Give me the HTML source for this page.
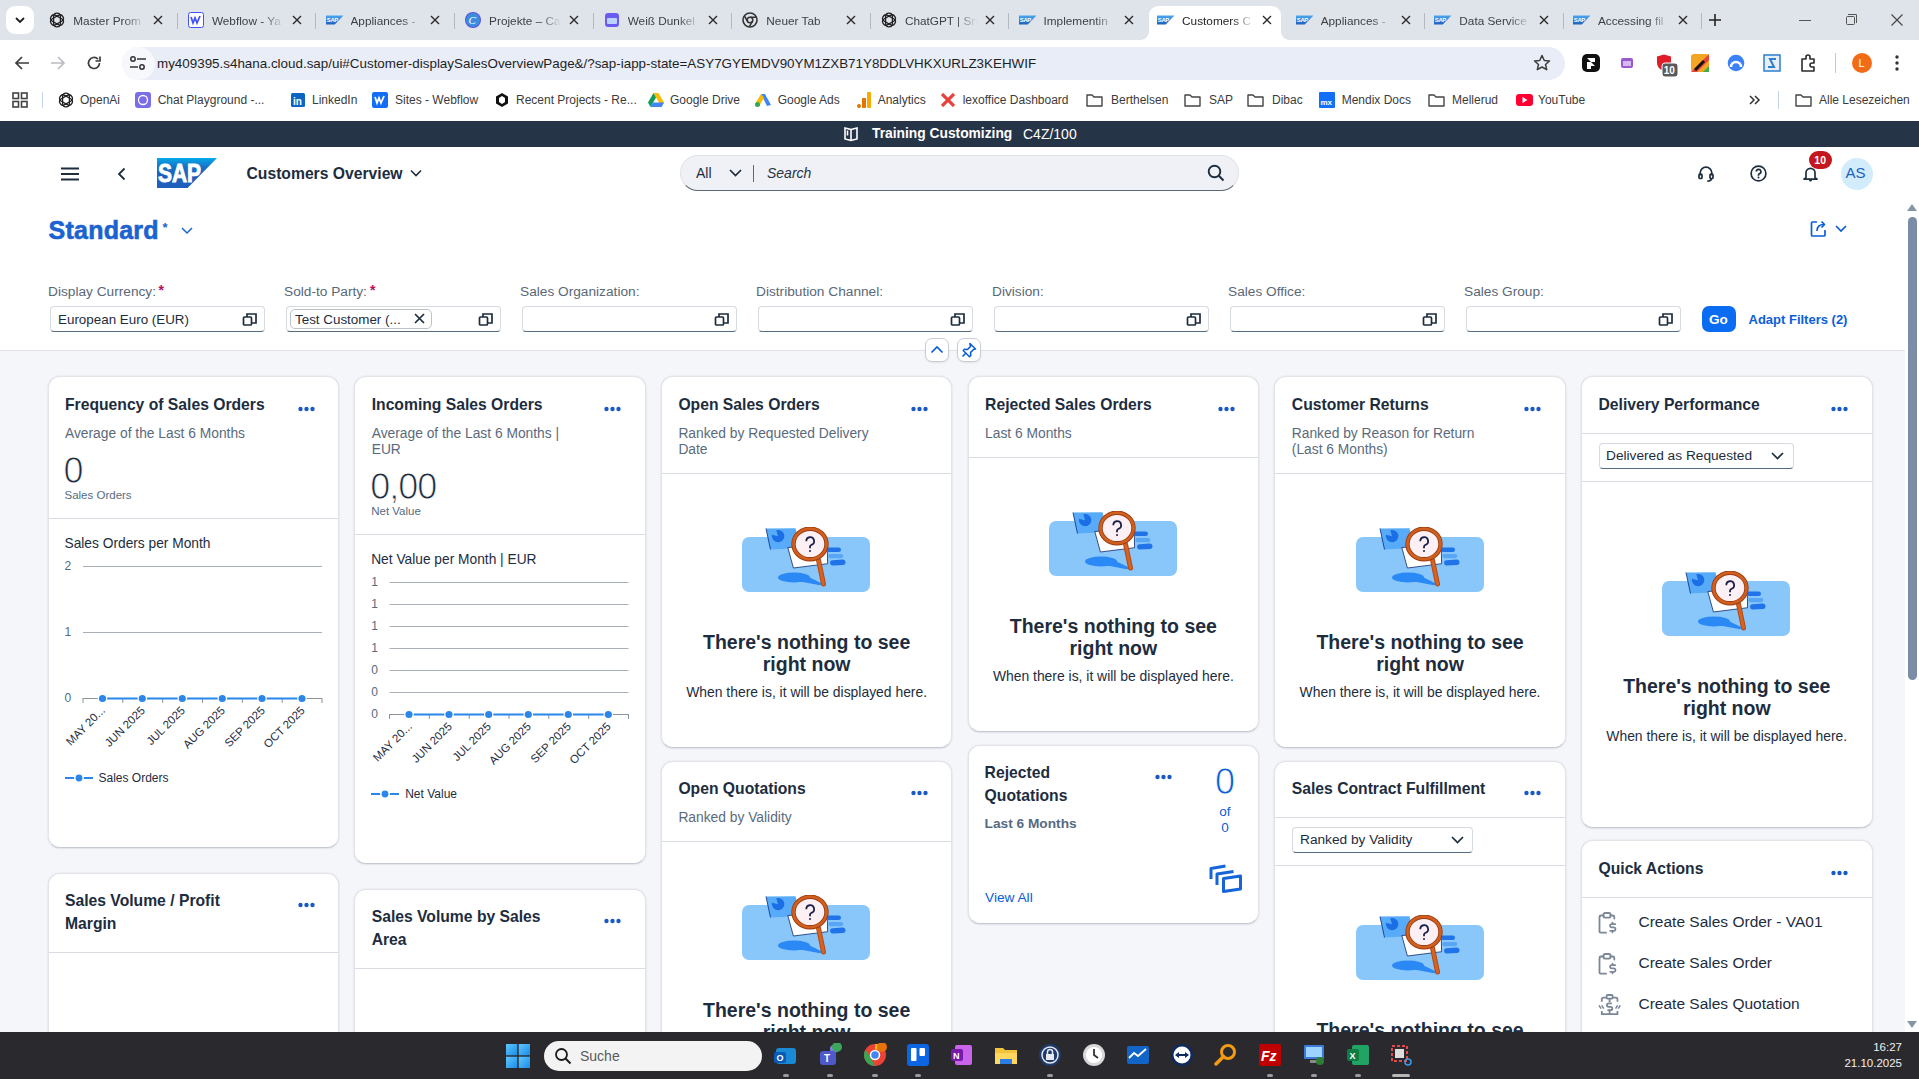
<!DOCTYPE html><html><head><meta charset="utf-8"><title>Customers Overview</title><style>
*{box-sizing:border-box;margin:0;padding:0}
html,body{width:1919px;height:1079px;overflow:hidden;background:#f5f6f9;font-family:"Liberation Sans",sans-serif}
.a{position:absolute}
.t{position:absolute;white-space:nowrap}
.card{position:absolute;background:#fff;border:1px solid #e2e4ea;border-bottom-color:#c5cad2;border-radius:12px;box-shadow:0 0 2px rgba(34,53,72,.12),0 1px 2px rgba(34,53,72,.06);overflow:hidden}
.sep{position:absolute;height:1px;background:#d9dce3}
</style></head><body>
<div class="a" style="left:0px;top:0px;width:1919px;height:40px;background:#dfe3ea"></div>
<div class="a" style="left:6px;top:6px;width:28px;height:28px;background:#fff;border-radius:9px"></div>
<svg class="a" style="left:14px;top:15px;" width="12" height="10" viewBox="0 0 12 10"><path d="M2 3l4 4 4-4" fill="none" stroke="#1f1f1f" stroke-width="1.8"/></svg>
<div class="a" style="left:177px;top:13px;width:1px;height:16px;background:#b4b8bf"></div>
<svg class="a" style="left:49.3px;top:12px;" width="16" height="16" viewBox="0 0 16 16"><g fill="none" stroke="#1f1f1f" stroke-width="1.25"><rect x="4.6" y="1.2" width="6.8" height="13.6" rx="3.4"/><rect x="4.6" y="1.2" width="6.8" height="13.6" rx="3.4" transform="rotate(60 8 8)"/><rect x="4.6" y="1.2" width="6.8" height="13.6" rx="3.4" transform="rotate(120 8 8)"/></g></svg>
<div class="t" style="left:73.3px;top:14px;font-size:11.8px;line-height:14px;color:#3c3f44;width:72px;overflow:hidden;-webkit-mask-image:linear-gradient(90deg,#000 70%,transparent)">Master Prom</div>
<svg class="a" style="left:153px;top:15px;" width="10" height="10" viewBox="0 0 10 10"><path d="M1 1l8 8M9 1l-8 8" stroke="#2a2a2a" stroke-width="1.35"/></svg>
<div class="a" style="left:315px;top:13px;width:1px;height:16px;background:#b4b8bf"></div>
<svg class="a" style="left:187.89999999999998px;top:12px;" width="16" height="16" viewBox="0 0 16 16"><rect x="0.5" y="0.5" width="15" height="15" rx="2" fill="#fff" stroke="#4353ff"/><path d="M3 5l2 6 2-5 2 5 3-7" fill="none" stroke="#4353ff" stroke-width="1.8"/></svg>
<div class="t" style="left:211.9px;top:14px;font-size:11.8px;line-height:14px;color:#3c3f44;width:72px;overflow:hidden;-webkit-mask-image:linear-gradient(90deg,#000 70%,transparent)">Webflow - Ya</div>
<svg class="a" style="left:292px;top:15px;" width="10" height="10" viewBox="0 0 10 10"><path d="M1 1l8 8M9 1l-8 8" stroke="#2a2a2a" stroke-width="1.35"/></svg>
<div class="a" style="left:454px;top:13px;width:1px;height:16px;background:#b4b8bf"></div>
<svg class="a" style="left:325.5px;top:14px;" width="18" height="12" viewBox="0 0 18 12"><defs><linearGradient id="fg" x1="0" y1="0" x2="0" y2="1"><stop offset="0" stop-color="#4aa8ee"/><stop offset="1" stop-color="#1f5fc0"/></linearGradient></defs><path d="M0 1.5h17.5L8.7 10.5H0z" fill="url(#fg)"/><text x="0.8" y="7.8" font-size="6" font-weight="bold" fill="#fff" font-family="Liberation Sans" letter-spacing="-.4">SAP</text></svg>
<div class="t" style="left:350.5px;top:14px;font-size:11.8px;line-height:14px;color:#3c3f44;width:72px;overflow:hidden;-webkit-mask-image:linear-gradient(90deg,#000 70%,transparent)">Appliances -</div>
<svg class="a" style="left:430px;top:15px;" width="10" height="10" viewBox="0 0 10 10"><path d="M1 1l8 8M9 1l-8 8" stroke="#2a2a2a" stroke-width="1.35"/></svg>
<div class="a" style="left:593px;top:13px;width:1px;height:16px;background:#b4b8bf"></div>
<svg class="a" style="left:465.09999999999997px;top:12px;" width="16" height="16" viewBox="0 0 16 16"><circle cx="8" cy="8" r="8" fill="#5a4fe0"/><circle cx="8" cy="8" r="7" fill="#2ab7d8" opacity=".6"/><text x="3.5" y="12" font-size="11" font-style="italic" fill="#fff" font-family="Liberation Serif">C</text></svg>
<div class="t" style="left:489.1px;top:14px;font-size:11.8px;line-height:14px;color:#3c3f44;width:72px;overflow:hidden;-webkit-mask-image:linear-gradient(90deg,#000 70%,transparent)">Projekte – Ca</div>
<svg class="a" style="left:569px;top:15px;" width="10" height="10" viewBox="0 0 10 10"><path d="M1 1l8 8M9 1l-8 8" stroke="#2a2a2a" stroke-width="1.35"/></svg>
<div class="a" style="left:731px;top:13px;width:1px;height:16px;background:#b4b8bf"></div>
<svg class="a" style="left:603.6999999999999px;top:12px;" width="16" height="16" viewBox="0 0 16 16"><rect x="1" y="1" width="14" height="14" rx="3" fill="#6b5cf0"/><rect x="3" y="6" width="10" height="6" rx="1" fill="#bcd3ff"/></svg>
<div class="t" style="left:627.7px;top:14px;font-size:11.8px;line-height:14px;color:#3c3f44;width:72px;overflow:hidden;-webkit-mask-image:linear-gradient(90deg,#000 70%,transparent)">Weiß Dunkel</div>
<svg class="a" style="left:708px;top:15px;" width="10" height="10" viewBox="0 0 10 10"><path d="M1 1l8 8M9 1l-8 8" stroke="#2a2a2a" stroke-width="1.35"/></svg>
<div class="a" style="left:870px;top:13px;width:1px;height:16px;background:#b4b8bf"></div>
<svg class="a" style="left:742.3px;top:12px;" width="16" height="16" viewBox="0 0 16 16"><circle cx="8" cy="8" r="7" fill="none" stroke="#333" stroke-width="1.6"/><circle cx="8" cy="8" r="2.8" fill="none" stroke="#333" stroke-width="1.5"/><path d="M8 5.2h6.3M5.6 9.4L2.4 4M10.4 9.4L7.2 14.8" stroke="#333" stroke-width="1.5"/></svg>
<div class="t" style="left:766.3px;top:14px;font-size:11.8px;line-height:14px;color:#3c3f44;width:72px;overflow:hidden;-webkit-mask-image:linear-gradient(90deg,#000 70%,transparent)">Neuer Tab</div>
<svg class="a" style="left:846px;top:15px;" width="10" height="10" viewBox="0 0 10 10"><path d="M1 1l8 8M9 1l-8 8" stroke="#2a2a2a" stroke-width="1.35"/></svg>
<div class="a" style="left:1008px;top:13px;width:1px;height:16px;background:#b4b8bf"></div>
<svg class="a" style="left:880.8999999999999px;top:12px;" width="16" height="16" viewBox="0 0 16 16"><g fill="none" stroke="#1f1f1f" stroke-width="1.25"><rect x="4.6" y="1.2" width="6.8" height="13.6" rx="3.4"/><rect x="4.6" y="1.2" width="6.8" height="13.6" rx="3.4" transform="rotate(60 8 8)"/><rect x="4.6" y="1.2" width="6.8" height="13.6" rx="3.4" transform="rotate(120 8 8)"/></g></svg>
<div class="t" style="left:904.9px;top:14px;font-size:11.8px;line-height:14px;color:#3c3f44;width:72px;overflow:hidden;-webkit-mask-image:linear-gradient(90deg,#000 70%,transparent)">ChatGPT | Sn</div>
<svg class="a" style="left:985px;top:15px;" width="10" height="10" viewBox="0 0 10 10"><path d="M1 1l8 8M9 1l-8 8" stroke="#2a2a2a" stroke-width="1.35"/></svg>
<svg class="a" style="left:1018.5px;top:14px;" width="18" height="12" viewBox="0 0 18 12"><defs><linearGradient id="fg" x1="0" y1="0" x2="0" y2="1"><stop offset="0" stop-color="#4aa8ee"/><stop offset="1" stop-color="#1f5fc0"/></linearGradient></defs><path d="M0 1.5h17.5L8.7 10.5H0z" fill="url(#fg)"/><text x="0.8" y="7.8" font-size="6" font-weight="bold" fill="#fff" font-family="Liberation Sans" letter-spacing="-.4">SAP</text></svg>
<div class="t" style="left:1043.5px;top:14px;font-size:11.8px;line-height:14px;color:#3c3f44;width:72px;overflow:hidden;-webkit-mask-image:linear-gradient(90deg,#000 70%,transparent)">Implementin</div>
<svg class="a" style="left:1124px;top:15px;" width="10" height="10" viewBox="0 0 10 10"><path d="M1 1l8 8M9 1l-8 8" stroke="#2a2a2a" stroke-width="1.35"/></svg>
<div class="a" style="left:1149px;top:6px;width:132px;height:36px;background:#fff;border-radius:9px 9px 0 0"></div>
<div class="a" style="left:1141px;top:32px;width:8px;height:8px;background:radial-gradient(circle at 0 0,transparent 7.5px,#fff 8px)"></div>
<div class="a" style="left:1281px;top:32px;width:8px;height:8px;background:radial-gradient(circle at 100% 0,transparent 7.5px,#fff 8px)"></div>
<svg class="a" style="left:1157.1px;top:14px;" width="18" height="12" viewBox="0 0 18 12"><defs><linearGradient id="fg" x1="0" y1="0" x2="0" y2="1"><stop offset="0" stop-color="#4aa8ee"/><stop offset="1" stop-color="#1f5fc0"/></linearGradient></defs><path d="M0 1.5h17.5L8.7 10.5H0z" fill="url(#fg)"/><text x="0.8" y="7.8" font-size="6" font-weight="bold" fill="#fff" font-family="Liberation Sans" letter-spacing="-.4">SAP</text></svg>
<div class="t" style="left:1182.1px;top:14px;font-size:11.8px;line-height:14px;color:#1f1f1f;width:72px;overflow:hidden;-webkit-mask-image:linear-gradient(90deg,#000 70%,transparent)">Customers C</div>
<svg class="a" style="left:1262px;top:15px;" width="10" height="10" viewBox="0 0 10 10"><path d="M1 1l8 8M9 1l-8 8" stroke="#2a2a2a" stroke-width="1.35"/></svg>
<div class="a" style="left:1424px;top:13px;width:1px;height:16px;background:#b4b8bf"></div>
<svg class="a" style="left:1295.6999999999998px;top:14px;" width="18" height="12" viewBox="0 0 18 12"><defs><linearGradient id="fg" x1="0" y1="0" x2="0" y2="1"><stop offset="0" stop-color="#4aa8ee"/><stop offset="1" stop-color="#1f5fc0"/></linearGradient></defs><path d="M0 1.5h17.5L8.7 10.5H0z" fill="url(#fg)"/><text x="0.8" y="7.8" font-size="6" font-weight="bold" fill="#fff" font-family="Liberation Sans" letter-spacing="-.4">SAP</text></svg>
<div class="t" style="left:1320.7px;top:14px;font-size:11.8px;line-height:14px;color:#3c3f44;width:72px;overflow:hidden;-webkit-mask-image:linear-gradient(90deg,#000 70%,transparent)">Appliances -</div>
<svg class="a" style="left:1401px;top:15px;" width="10" height="10" viewBox="0 0 10 10"><path d="M1 1l8 8M9 1l-8 8" stroke="#2a2a2a" stroke-width="1.35"/></svg>
<div class="a" style="left:1563px;top:13px;width:1px;height:16px;background:#b4b8bf"></div>
<svg class="a" style="left:1434.3px;top:14px;" width="18" height="12" viewBox="0 0 18 12"><defs><linearGradient id="fg" x1="0" y1="0" x2="0" y2="1"><stop offset="0" stop-color="#4aa8ee"/><stop offset="1" stop-color="#1f5fc0"/></linearGradient></defs><path d="M0 1.5h17.5L8.7 10.5H0z" fill="url(#fg)"/><text x="0.8" y="7.8" font-size="6" font-weight="bold" fill="#fff" font-family="Liberation Sans" letter-spacing="-.4">SAP</text></svg>
<div class="t" style="left:1459.3px;top:14px;font-size:11.8px;line-height:14px;color:#3c3f44;width:72px;overflow:hidden;-webkit-mask-image:linear-gradient(90deg,#000 70%,transparent)">Data Service</div>
<svg class="a" style="left:1539px;top:15px;" width="10" height="10" viewBox="0 0 10 10"><path d="M1 1l8 8M9 1l-8 8" stroke="#2a2a2a" stroke-width="1.35"/></svg>
<div class="a" style="left:1701px;top:13px;width:1px;height:16px;background:#b4b8bf"></div>
<svg class="a" style="left:1572.8999999999999px;top:14px;" width="18" height="12" viewBox="0 0 18 12"><defs><linearGradient id="fg" x1="0" y1="0" x2="0" y2="1"><stop offset="0" stop-color="#4aa8ee"/><stop offset="1" stop-color="#1f5fc0"/></linearGradient></defs><path d="M0 1.5h17.5L8.7 10.5H0z" fill="url(#fg)"/><text x="0.8" y="7.8" font-size="6" font-weight="bold" fill="#fff" font-family="Liberation Sans" letter-spacing="-.4">SAP</text></svg>
<div class="t" style="left:1597.9px;top:14px;font-size:11.8px;line-height:14px;color:#3c3f44;width:72px;overflow:hidden;-webkit-mask-image:linear-gradient(90deg,#000 70%,transparent)">Accessing fil</div>
<svg class="a" style="left:1678px;top:15px;" width="10" height="10" viewBox="0 0 10 10"><path d="M1 1l8 8M9 1l-8 8" stroke="#2a2a2a" stroke-width="1.35"/></svg>
<svg class="a" style="left:1709px;top:14px;" width="12" height="12" viewBox="0 0 12 12"><path d="M6 0v12M0 6h12" stroke="#222" stroke-width="1.6"/></svg>
<div class="a" style="left:1799px;top:20px;width:12px;height:1px;background:#555"></div>
<div class="a" style="left:1846px;top:16px;width:9px;height:9px;border:1px solid #555;border-radius:1.5px"></div>
<div class="a" style="left:1848px;top:14px;width:9px;height:9px;border-top:1px solid #555;border-right:1px solid #555;border-radius:0 1.5px 0 0"></div>
<svg class="a" style="left:1891px;top:14px;" width="12" height="12" viewBox="0 0 12 12"><path d="M0.5 0.5l11 11M11.5 0.5l-11 11" stroke="#444" stroke-width="1.1"/></svg>
<div class="a" style="left:0px;top:40px;width:1919px;height:44px;background:#fff;border-radius:0"></div>
<svg class="a" style="left:14px;top:55px;" width="16" height="16" viewBox="0 0 16 16"><path d="M15 8H2M8 2L2 8l6 6" fill="none" stroke="#3c3c3c" stroke-width="1.7"/></svg>
<svg class="a" style="left:50px;top:55px;" width="16" height="16" viewBox="0 0 16 16"><path d="M1 8h13M8 2l6 6-6 6" fill="none" stroke="#b9bcc0" stroke-width="1.7"/></svg>
<svg class="a" style="left:86px;top:55px;" width="16" height="16" viewBox="0 0 16 16"><path d="M13.5 8a5.5 5.5 0 1 1-1.6-3.9" fill="none" stroke="#3c3c3c" stroke-width="1.7"/><path d="M14 1.5v4.5H9.5" fill="none" stroke="#3c3c3c" stroke-width="1.7"/></svg>
<div class="a" style="left:122px;top:47px;width:1443px;height:33px;background:#e8edf8;border-radius:17px"></div>
<div class="a" style="left:122px;top:47px;width:33px;height:33px;background:#f6f8fc;border-radius:50%"></div>
<svg class="a" style="left:129px;top:55px;" width="18" height="16" viewBox="0 0 18 16"><g fill="none" stroke="#333" stroke-width="1.5"><path d="M8 4h9M1 12h8"/><circle cx="4" cy="4" r="2.2"/><circle cx="13" cy="12" r="2.2"/></g></svg>
<div class="t " style="left:157.0px;top:56.7px;font-size:13.4px;line-height:13.4px;color:#1f1f1f;" >my409395.s4hana.cloud.sap/ui#Customer-displaySalesOverviewPage&amp;/?sap-iapp-state=ASY7GYEMDV90YM1ZXB71Y8DDLVHKXURLZ3KEHWIF</div>
<svg class="a" style="left:1533px;top:54px;" width="18" height="18" viewBox="0 0 18 18"><path d="M9 1.5l2.3 5 5.2.5-4 3.5 1.2 5.2L9 13l-4.7 2.7 1.2-5.2-4-3.5 5.2-.5z" fill="none" stroke="#3c3c3c" stroke-width="1.5" stroke-linejoin="round"/></svg>
<svg class="a" style="left:1582px;top:54px;" width="18" height="18" viewBox="0 0 18 18"><rect width="18" height="18" rx="5" fill="#111"/><path d="M5 4h8v4H9l4 4H9v3H5V8h4z" fill="#fff"/></svg>
<svg class="a" style="left:1619px;top:55px;" width="16" height="16" viewBox="0 0 16 16"><rect x="2" y="3" width="12" height="10" rx="2" fill="#9b59d0"/><rect x="4" y="6" width="8" height="5" fill="#d8b8f0"/></svg>
<svg class="a" style="left:1655px;top:54px;" width="24" height="24" viewBox="0 0 24 24"><path d="M2 2.5l7-2 7 2v6c0 5-3.5 7-7 9-3.5-2-7-4-7-9z" fill="#e01c2a"/><rect x="7" y="9" width="16" height="14" rx="3" fill="#5a5a5a" stroke="#fff" stroke-width="1"/><text x="8.8" y="20" font-size="10" font-weight="bold" fill="#fff" font-family="Liberation Sans">10</text></svg>
<svg class="a" style="left:1691px;top:54px;" width="18" height="18" viewBox="0 0 18 18"><rect width="18" height="18" rx="3" fill="#f2a623"/><path d="M0 18L18 0v6L6 18z" fill="#e8403a"/><path d="M12 18L18 12v6z" fill="#3fae49"/><path d="M3 15l9-9 2 2-9 9z" fill="#111"/></svg>
<svg class="a" style="left:1727px;top:54px;" width="18" height="18" viewBox="0 0 18 18"><circle cx="9" cy="9" r="8.3" fill="#3b82f6"/><path d="M4 13a5 5 0 0 1 10 0" fill="none" stroke="#fff" stroke-width="2.5"/></svg>
<svg class="a" style="left:1763px;top:54px;" width="18" height="18" viewBox="0 0 18 18"><rect x="1" y="1" width="16" height="16" fill="#e8eef7" stroke="#2d7fd0" stroke-width="1.5"/><path d="M13 5H7l4 8H5" fill="none" stroke="#2d7fd0" stroke-width="2"/></svg>
<svg class="a" style="left:1799px;top:54px;" width="18" height="18" viewBox="0 0 18 18"><path d="M3 5h4V3a2 2 0 0 1 4 0v2h4v4h-2a2 2 0 0 0 0 4h2v4H3z" fill="none" stroke="#2b2b2b" stroke-width="1.6" stroke-linejoin="round"/></svg>
<div class="a" style="left:1835px;top:53px;width:1px;height:20px;background:#c7c9cc"></div>
<div class="a" style="left:1852px;top:53px;width:20px;height:20px;border-radius:50%;background:#f26c17"></div>
<div class="t " style="left:1858.5px;top:58.2px;font-size:11px;line-height:11px;color:#fff;" >L</div>
<svg class="a" style="left:1894px;top:54px;" width="6" height="18" viewBox="0 0 6 18"><circle cx="3" cy="3" r="1.7" fill="#333"/><circle cx="3" cy="9" r="1.7" fill="#333"/><circle cx="3" cy="15" r="1.7" fill="#333"/></svg>
<div class="a" style="left:0px;top:84px;width:1919px;height:37px;background:#fff"></div>
<svg class="a" style="left:12px;top:92px;" width="16" height="16" viewBox="0 0 16 16"><g fill="none" stroke="#444" stroke-width="1.6"><rect x="1" y="1" width="5.5" height="5.5"/><rect x="9.5" y="1" width="5.5" height="5.5"/><rect x="1" y="9.5" width="5.5" height="5.5"/><rect x="9.5" y="9.5" width="5.5" height="5.5"/></g></svg>
<div class="a" style="left:42px;top:92px;width:1px;height:16px;background:#c5d4ee"></div>
<svg class="a" style="left:57.7px;top:92px;" width="16" height="16" viewBox="0 0 16 16"><g fill="none" stroke="#1f1f1f" stroke-width="1.25"><rect x="4.6" y="1.2" width="6.8" height="13.6" rx="3.4"/><rect x="4.6" y="1.2" width="6.8" height="13.6" rx="3.4" transform="rotate(60 8 8)"/><rect x="4.6" y="1.2" width="6.8" height="13.6" rx="3.4" transform="rotate(120 8 8)"/></g></svg>
<div class="t " style="left:80.0px;top:94.3px;font-size:12px;line-height:12px;color:#3b3b3b;" >OpenAi</div>
<svg class="a" style="left:135px;top:92px;" width="16" height="16" viewBox="0 0 16 16"><rect width="16" height="16" rx="3" fill="#7b6ce8"/><circle cx="8" cy="8" r="4.5" fill="none" stroke="#fff" stroke-width="1.3"/></svg>
<div class="t " style="left:157.7px;top:94.3px;font-size:12px;line-height:12px;color:#3b3b3b;" >Chat Playground -...</div>
<svg class="a" style="left:290.7px;top:93px;" width="14" height="14" viewBox="0 0 14 14"><rect width="14" height="14" rx="1.5" fill="#0a66c2"/><text x="2" y="11.5" font-size="10" font-weight="bold" fill="#fff" font-family="Liberation Sans">in</text></svg>
<div class="t " style="left:312.0px;top:94.3px;font-size:12px;line-height:12px;color:#3b3b3b;" >LinkedIn</div>
<svg class="a" style="left:372px;top:92px;" width="16" height="16" viewBox="0 0 16 16"><rect width="16" height="16" rx="2" fill="#146ef5"/><path d="M3 5l2 6 2-5 2 5 3-7" fill="none" stroke="#fff" stroke-width="1.8"/></svg>
<div class="t " style="left:395.0px;top:94.3px;font-size:12px;line-height:12px;color:#3b3b3b;" >Sites - Webflow</div>
<svg class="a" style="left:493.7px;top:92px;" width="16" height="16" viewBox="0 0 16 16"><path d="M8 1l6 3.5v7L8 15l-6-3.5v-7z" fill="#111"/><path d="M8 4l3 2v4l-3 2-3-2V6z" fill="#fff"/></svg>
<div class="t " style="left:516.0px;top:94.3px;font-size:12px;line-height:12px;color:#3b3b3b;" >Recent Projects - Re...</div>
<svg class="a" style="left:647.7px;top:93px;" width="16" height="14" viewBox="0 0 16 14"><path d="M5.5 0h5l5.5 9.5-2.5 4.5z" fill="#fbbc04"/><path d="M5.5 0L0 9.5 2.5 14 8 4.5z" fill="#0f9d58"/><path d="M2.5 14h11l2.5-4.5H5z" fill="#4285f4"/></svg>
<div class="t " style="left:670.0px;top:94.3px;font-size:12px;line-height:12px;color:#3b3b3b;" >Google Drive</div>
<svg class="a" style="left:755px;top:93px;" width="16" height="14" viewBox="0 0 16 14"><path d="M6 1l4 0 6 11-4 1z" fill="#4285f4"/><path d="M6 1L0 11l4 2 5-8z" fill="#fbbc04"/><circle cx="2.5" cy="11.5" r="2.5" fill="#34a853"/></svg>
<div class="t " style="left:777.7px;top:94.3px;font-size:12px;line-height:12px;color:#3b3b3b;" >Google Ads</div>
<svg class="a" style="left:857px;top:92px;" width="14" height="16" viewBox="0 0 14 16"><rect x="10" y="0" width="4" height="16" rx="1" fill="#f9ab00"/><rect x="5" y="6" width="4" height="10" rx="1" fill="#e37400"/><circle cx="2" cy="14" r="2" fill="#e37400"/></svg>
<div class="t " style="left:877.7px;top:94.3px;font-size:12px;line-height:12px;color:#3b3b3b;" >Analytics</div>
<svg class="a" style="left:941px;top:93px;" width="14" height="14" viewBox="0 0 14 14"><path d="M1 1l12 12M13 1L1 13" stroke="#e8403a" stroke-width="3.2"/></svg>
<div class="t " style="left:962.7px;top:94.3px;font-size:12px;line-height:12px;color:#3b3b3b;" >lexoffice Dashboard</div>
<svg class="a" style="left:1086px;top:93px;" width="17" height="14" viewBox="0 0 17 14"><path d="M1 2h5l2 2h8v9H1z" fill="none" stroke="#444" stroke-width="1.4" stroke-linejoin="round"/></svg>
<div class="t " style="left:1111.0px;top:94.3px;font-size:12px;line-height:12px;color:#3b3b3b;" >Berthelsen</div>
<svg class="a" style="left:1184px;top:93px;" width="17" height="14" viewBox="0 0 17 14"><path d="M1 2h5l2 2h8v9H1z" fill="none" stroke="#444" stroke-width="1.4" stroke-linejoin="round"/></svg>
<div class="t " style="left:1209.0px;top:94.3px;font-size:12px;line-height:12px;color:#3b3b3b;" >SAP</div>
<svg class="a" style="left:1247px;top:93px;" width="17" height="14" viewBox="0 0 17 14"><path d="M1 2h5l2 2h8v9H1z" fill="none" stroke="#444" stroke-width="1.4" stroke-linejoin="round"/></svg>
<div class="t " style="left:1272.0px;top:94.3px;font-size:12px;line-height:12px;color:#3b3b3b;" >Dibac</div>
<svg class="a" style="left:1318.7px;top:92px;" width="16" height="16" viewBox="0 0 16 16"><rect width="16" height="16" rx="1" fill="#146ff8"/><text x="1.5" y="13" font-size="8" font-weight="bold" fill="#fff" font-family="Liberation Sans">mx</text></svg>
<div class="t " style="left:1341.7px;top:94.3px;font-size:12px;line-height:12px;color:#3b3b3b;" >Mendix Docs</div>
<svg class="a" style="left:1428px;top:93px;" width="17" height="14" viewBox="0 0 17 14"><path d="M1 2h5l2 2h8v9H1z" fill="none" stroke="#444" stroke-width="1.4" stroke-linejoin="round"/></svg>
<div class="t " style="left:1452.0px;top:94.3px;font-size:12px;line-height:12px;color:#3b3b3b;" >Mellerud</div>
<svg class="a" style="left:1516px;top:94px;" width="17" height="12" viewBox="0 0 17 12"><rect width="17" height="12" rx="3" fill="#ff0033"/><path d="M6.5 3l5 3-5 3z" fill="#fff"/></svg>
<div class="t " style="left:1538.0px;top:94.3px;font-size:12px;line-height:12px;color:#3b3b3b;" >YouTube</div>
<svg class="a" style="left:1795px;top:93px;" width="17" height="14" viewBox="0 0 17 14"><path d="M1 2h5l2 2h8v9H1z" fill="none" stroke="#444" stroke-width="1.4" stroke-linejoin="round"/></svg>
<div class="t " style="left:1819.0px;top:94.3px;font-size:12px;line-height:12px;color:#3b3b3b;" >Alle Lesezeichen</div>
<svg class="a" style="left:1749px;top:95px;" width="12" height="10" viewBox="0 0 12 10"><path d="M1 1l4 4-4 4M6 1l4 4-4 4" fill="none" stroke="#333" stroke-width="1.5"/></svg>
<div class="a" style="left:1778px;top:91px;width:1px;height:18px;background:#c5d4ee"></div>
<div class="a" style="left:0px;top:121px;width:1919px;height:26px;background:#263447"></div>
<svg class="a" style="left:843px;top:126px;" width="18" height="16" viewBox="0 0 18 16"><g fill="none" stroke="#fff" stroke-width="1.6"><path d="M2 2v11l6 1.5 6-1.5V2L8 3.5z"/><path d="M8 3.5v11"/><path d="M4.5 4.5v5"/></g></svg>
<div class="t " style="left:872.0px;top:127.3px;font-size:13.8px;line-height:13.8px;color:#fff;font-weight:bold;" >Training Customizing</div>
<div class="t " style="left:1023.0px;top:127.1px;font-size:14px;line-height:14px;color:#fff;" >C4Z/100</div>
<div class="a" style="left:0px;top:147px;width:1919px;height:203px;background:#fff"></div>
<svg class="a" style="left:61px;top:167px;" width="18" height="14" viewBox="0 0 18 14"><path d="M0 1.5h18M0 7h18M0 12.5h18" stroke="#1d2d3e" stroke-width="1.8"/></svg>
<svg class="a" style="left:117px;top:167px;" width="9" height="14" viewBox="0 0 9 14"><path d="M7.5 1.5L2 7l5.5 5.5" fill="none" stroke="#1d2d3e" stroke-width="1.8"/></svg>
<svg class="a" style="left:157px;top:158px;" width="60" height="30" viewBox="0 0 60 30"><defs><linearGradient id="sg" x1="0" y1="0" x2="0" y2="1"><stop offset="0" stop-color="#00b8f1"/><stop offset=".02" stop-color="#06a5e5"/><stop offset=".31" stop-color="#1870c5"/><stop offset=".58" stop-color="#1d61bc"/><stop offset="1" stop-color="#1e5fbb"/></linearGradient></defs><path d="M0 0h60L30.6 30H0z" fill="url(#sg)"/><text x="1" y="24.1" font-size="25" font-weight="bold" fill="#fff" font-family="Liberation Sans" textLength="43" lengthAdjust="spacingAndGlyphs" stroke="#fff" stroke-width=".9">SAP</text></svg>
<div class="t " style="left:246.5px;top:166.2px;font-size:15.7px;line-height:15.7px;color:#1d2d3e;font-weight:bold;" >Customers Overview</div>
<svg class="a" style="left:410px;top:169px;" width="12" height="8" viewBox="0 0 12 8"><path d="M1 1.5l5 5 5-5" fill="none" stroke="#1d2d3e" stroke-width="1.6"/></svg>
<div class="a" style="left:680px;top:155px;width:559px;height:36px;background:#eff1f6;border:1px solid #dfe2e8;border-bottom:1px solid #5b6776;border-radius:18px"></div>
<div class="t " style="left:696.0px;top:166.0px;font-size:14px;line-height:14px;color:#1d2d3e;" >All</div>
<svg class="a" style="left:729px;top:169px;" width="13" height="8" viewBox="0 0 13 8"><path d="M1 1l5.5 5.5L12 1" fill="none" stroke="#1d2d3e" stroke-width="1.7"/></svg>
<div class="a" style="left:753px;top:165px;width:1px;height:17px;background:#556b82"></div>
<div class="t " style="left:767.0px;top:166.0px;font-size:14px;line-height:14px;color:#2b3542;font-style:italic" >Search</div>
<svg class="a" style="left:1207px;top:164px;" width="18" height="18" viewBox="0 0 18 18"><circle cx="7.5" cy="7.5" r="5.8" fill="none" stroke="#1d2d3e" stroke-width="1.9"/><path d="M11.8 11.8l4.7 4.7" stroke="#1d2d3e" stroke-width="2"/></svg>
<svg class="a" style="left:1698px;top:165px;" width="16" height="17" viewBox="0 0 16 17"><g fill="none" stroke="#1d2d3e" stroke-width="1.7"><path d="M2.2 10.5V8a5.8 5.8 0 0 1 11.6 0v2.5"/><rect x="1" y="9" width="3" height="4.5" rx="1"/><rect x="12" y="9" width="3" height="4.5" rx="1"/><path d="M13.5 13.5c0 1.6-1.6 2.6-4.2 2.6"/></g></svg>
<svg class="a" style="left:1749.5px;top:165.2px;" width="17" height="17" viewBox="0 0 17 17"><circle cx="8.5" cy="8.5" r="7.4" fill="none" stroke="#1d2d3e" stroke-width="1.7"/><path d="M6.3 6.6a2.3 2.3 0 1 1 3.1 2.2c-.6.3-.9.7-.9 1.3v.6" fill="none" stroke="#1d2d3e" stroke-width="1.7"/><circle cx="8.5" cy="12.6" r="1" fill="#1d2d3e"/></svg>
<svg class="a" style="left:1802.5px;top:166px;" width="15" height="16" viewBox="0 0 15 16"><path d="M3 11.5V6.8a4.5 4.5 0 0 1 9 0v4.7l2 1.6H1z" fill="none" stroke="#1d2d3e" stroke-width="1.7" stroke-linejoin="round"/><path d="M6 14a1.5 1.5 0 0 0 3 0z" fill="#1d2d3e"/></svg>
<div class="a" style="left:1809px;top:151px;width:23px;height:18px;border-radius:9px;background:#c4161f"></div>
<div class="t " style="left:1814.3px;top:155.1px;font-size:10.5px;line-height:10.5px;color:#fff;font-weight:bold;" >10</div>
<div class="a" style="left:1840.5px;top:157.5px;width:32px;height:32px;border-radius:50%;background:#d3ecfb"></div>
<div class="t " style="left:1845.5px;top:165.3px;font-size:15px;line-height:15px;color:#1c5fbf;" >AS</div>
<div class="t " style="left:48.5px;top:217.8px;font-size:25px;line-height:25px;color:#1b63d0;font-weight:bold;-webkit-text-stroke:0.6px #1b63d0;letter-spacing:0.25px" >Standard</div>
<div class="t " style="left:162.5px;top:221.0px;font-size:13px;line-height:13px;color:#1b63d0;font-weight:bold;" >*</div>
<svg class="a" style="left:180.5px;top:227px;" width="12" height="8" viewBox="0 0 12 8"><path d="M1 1l5 5 5-5" fill="none" stroke="#1b63d0" stroke-width="1.5"/></svg>
<svg class="a" style="left:1810px;top:220px;" width="18" height="17" viewBox="0 0 18 17"><g fill="none" stroke="#0b5fd4" stroke-width="1.7" stroke-linejoin="round"><path d="M7 2H2.5a1 1 0 0 0-1 1v12a1 1 0 0 0 1 1h11.5a1 1 0 0 0 1-1v-5"/><path d="M7 11c0-4.5 2.5-6.5 7-6.5"/><path d="M11.5 1.5l3 3-3 3"/></g></svg>
<svg class="a" style="left:1835px;top:225px;" width="12" height="8" viewBox="0 0 12 8"><path d="M1 1l5 5 5-5" fill="none" stroke="#0a5ed8" stroke-width="1.7"/></svg>
<div class="t " style="left:48.0px;top:285.1px;font-size:13.7px;line-height:13.7px;color:#5b6877;" >Display Currency:</div>
<div class="t" style="left:158.5px;top:283px;font-size:14px;line-height:14px;color:#b5105e;font-weight:bold">*</div>
<div class="a" style="left:50px;top:306px;width:215px;height:26px;background:#fff;border:1px solid #d6dae1;border-bottom:1px solid #556b82;border-radius:4px"></div>
<svg class="a" style="left:241px;top:311px;" width="16" height="16" viewBox="0 0 16 16"><g fill="none" stroke="#1d2d3e" stroke-width="1.7"><rect x="2.5" y="6" width="8" height="8" rx="1"/><path d="M6 6V3h9v9h-4.5"/></g></svg>
<div class="t " style="left:284.0px;top:285.1px;font-size:13.7px;line-height:13.7px;color:#5b6877;" >Sold-to Party:</div>
<div class="t" style="left:370.0px;top:283px;font-size:14px;line-height:14px;color:#b5105e;font-weight:bold">*</div>
<div class="a" style="left:286px;top:306px;width:215px;height:26px;background:#fff;border:1px solid #d6dae1;border-bottom:1px solid #556b82;border-radius:4px"></div>
<svg class="a" style="left:477px;top:311px;" width="16" height="16" viewBox="0 0 16 16"><g fill="none" stroke="#1d2d3e" stroke-width="1.7"><rect x="2.5" y="6" width="8" height="8" rx="1"/><path d="M6 6V3h9v9h-4.5"/></g></svg>
<div class="t " style="left:520.0px;top:285.1px;font-size:13.7px;line-height:13.7px;color:#5b6877;" >Sales Organization:</div>
<div class="a" style="left:522px;top:306px;width:215px;height:26px;background:#fff;border:1px solid #d6dae1;border-bottom:1px solid #556b82;border-radius:4px"></div>
<svg class="a" style="left:713px;top:311px;" width="16" height="16" viewBox="0 0 16 16"><g fill="none" stroke="#1d2d3e" stroke-width="1.7"><rect x="2.5" y="6" width="8" height="8" rx="1"/><path d="M6 6V3h9v9h-4.5"/></g></svg>
<div class="t " style="left:756.0px;top:285.1px;font-size:13.7px;line-height:13.7px;color:#5b6877;" >Distribution Channel:</div>
<div class="a" style="left:758px;top:306px;width:215px;height:26px;background:#fff;border:1px solid #d6dae1;border-bottom:1px solid #556b82;border-radius:4px"></div>
<svg class="a" style="left:949px;top:311px;" width="16" height="16" viewBox="0 0 16 16"><g fill="none" stroke="#1d2d3e" stroke-width="1.7"><rect x="2.5" y="6" width="8" height="8" rx="1"/><path d="M6 6V3h9v9h-4.5"/></g></svg>
<div class="t " style="left:992.0px;top:285.1px;font-size:13.7px;line-height:13.7px;color:#5b6877;" >Division:</div>
<div class="a" style="left:994px;top:306px;width:215px;height:26px;background:#fff;border:1px solid #d6dae1;border-bottom:1px solid #556b82;border-radius:4px"></div>
<svg class="a" style="left:1185px;top:311px;" width="16" height="16" viewBox="0 0 16 16"><g fill="none" stroke="#1d2d3e" stroke-width="1.7"><rect x="2.5" y="6" width="8" height="8" rx="1"/><path d="M6 6V3h9v9h-4.5"/></g></svg>
<div class="t " style="left:1228.0px;top:285.1px;font-size:13.7px;line-height:13.7px;color:#5b6877;" >Sales Office:</div>
<div class="a" style="left:1230px;top:306px;width:215px;height:26px;background:#fff;border:1px solid #d6dae1;border-bottom:1px solid #556b82;border-radius:4px"></div>
<svg class="a" style="left:1421px;top:311px;" width="16" height="16" viewBox="0 0 16 16"><g fill="none" stroke="#1d2d3e" stroke-width="1.7"><rect x="2.5" y="6" width="8" height="8" rx="1"/><path d="M6 6V3h9v9h-4.5"/></g></svg>
<div class="t " style="left:1464.0px;top:285.1px;font-size:13.7px;line-height:13.7px;color:#5b6877;" >Sales Group:</div>
<div class="a" style="left:1466px;top:306px;width:215px;height:26px;background:#fff;border:1px solid #d6dae1;border-bottom:1px solid #556b82;border-radius:4px"></div>
<svg class="a" style="left:1657px;top:311px;" width="16" height="16" viewBox="0 0 16 16"><g fill="none" stroke="#1d2d3e" stroke-width="1.7"><rect x="2.5" y="6" width="8" height="8" rx="1"/><path d="M6 6V3h9v9h-4.5"/></g></svg>
<div class="t " style="left:58.0px;top:313.0px;font-size:13.4px;line-height:13.4px;color:#1d2d3e;" >European Euro (EUR)</div>
<div class="a" style="left:290px;top:309px;width:142px;height:20px;background:#fff;border:1px solid #bcc3ca;border-radius:5px"></div>
<div class="t " style="left:295.0px;top:313.0px;font-size:13.4px;line-height:13.4px;color:#1d2d3e;" >Test Customer (...</div>
<svg class="a" style="left:414px;top:313px;" width="11" height="11" viewBox="0 0 11 11"><path d="M1 1l9 9M10 1l-9 9" stroke="#1d2d3e" stroke-width="1.7"/></svg>
<div class="a" style="left:1702px;top:306px;width:34px;height:26px;background:#0a6cf0;border-radius:7px"></div>
<div class="t " style="left:1709.0px;top:312.6px;font-size:13.5px;line-height:13.5px;color:#fff;font-weight:bold;" >Go</div>
<div class="t " style="left:1748.5px;top:313.0px;font-size:13px;line-height:13px;color:#0b5ed7;font-weight:bold;" >Adapt Filters (2)</div>
<div class="a" style="left:0px;top:351px;width:1905px;height:681px;background:#f5f6f9"></div>
<div class="a" style="left:0px;top:350px;width:1905px;height:1px;background:#dfe2e8"></div>
<div class="a" style="left:925px;top:338px;width:24px;height:24px;background:#fff;border:1px solid #c9ced6;border-radius:7px;box-shadow:0 1px 2px rgba(0,0,0,.08)"></div>
<svg class="a" style="left:930px;top:345px;" width="14" height="9" viewBox="0 0 14 9"><path d="M1.5 7.5L7 2l5.5 5.5" fill="none" stroke="#0a5ed8" stroke-width="1.7"/></svg>
<div class="a" style="left:957px;top:338px;width:24px;height:24px;background:#fff;border:1px solid #c9ced6;border-radius:7px;box-shadow:0 1px 2px rgba(0,0,0,.08)"></div>
<svg class="a" style="left:961px;top:342px;" width="16" height="16" viewBox="0 0 16 16"><g fill="none" stroke="#0a5ed8" stroke-width="1.6" stroke-linejoin="round"><path d="M9 1.5l5.5 5.5-2 .5-3 3 .3 3-1.3 1.3-6.3-6.3L3.5 7.2l3 .3 3-3z"/><path d="M5 11l-3.5 3.5"/></g></svg>
<div class="a" style="left:1905px;top:200px;width:14px;height:832px;background:#fff"></div>
<svg class="a" style="left:1906px;top:203px;" width="12" height="9" viewBox="0 0 12 9"><path d="M6 1l5 7H1z" fill="#8696a9"/></svg>
<div class="a" style="left:1908px;top:217px;width:9px;height:463px;background:#7b8ca6;border-radius:4.5px"></div>
<svg class="a" style="left:1906px;top:1020px;" width="12" height="9" viewBox="0 0 12 9"><path d="M6 8l5-7H1z" fill="#8696a9"/></svg>
<div class="card" style="left:47.5px;top:376px;width:291.5px;height:472px"></div>
<div class="t " style="left:65.0px;top:396.7px;font-size:15.7px;line-height:15.7px;color:#1d2d3e;font-weight:bold;" >Frequency of Sales Orders</div>
<svg class="a" style="left:297.5px;top:406px;" width="18" height="6" viewBox="0 0 18 6"><circle cx="2.5" cy="3" r="2.2" fill="#1a59c4"/><circle cx="8.5" cy="3" r="2.2" fill="#1a59c4"/><circle cx="14.5" cy="3" r="2.2" fill="#1a59c4"/></svg>
<div class="t " style="left:65.0px;top:427.3px;font-size:13.8px;line-height:13.8px;color:#5a6a7d;" >Average of the Last 6 Months</div>
<div class="t " style="left:63.5px;top:452.5px;font-size:36px;line-height:36px;color:#1d2d3e;-webkit-text-stroke:0.9px #fff" >0</div>
<div class="t " style="left:64.5px;top:490.3px;font-size:11.5px;line-height:11.5px;color:#556b82;" >Sales Orders</div>
<div class="sep" style="left:48.5px;top:518px;width:289.5px"></div>
<div class="t " style="left:64.5px;top:536.7px;font-size:13.75px;line-height:13.75px;color:#1d2d3e;" >Sales Orders per Month</div>
<svg class="a" style="left:0;top:0" width="1919" height="1079"><line x1="83" y1="566.5" x2="322" y2="566.5" stroke="#a9b0b8" stroke-width="1"/><line x1="83" y1="632.5" x2="322" y2="632.5" stroke="#a9b0b8" stroke-width="1"/><line x1="83" y1="698.5" x2="322" y2="698.5" stroke="#8a949e" stroke-width="1"/><line x1="83.0" y1="698" x2="83.0" y2="703" stroke="#8a949e" stroke-width="1"/><line x1="122.8" y1="698" x2="122.8" y2="703" stroke="#8a949e" stroke-width="1"/><line x1="162.7" y1="698" x2="162.7" y2="703" stroke="#8a949e" stroke-width="1"/><line x1="202.5" y1="698" x2="202.5" y2="703" stroke="#8a949e" stroke-width="1"/><line x1="242.3" y1="698" x2="242.3" y2="703" stroke="#8a949e" stroke-width="1"/><line x1="282.2" y1="698" x2="282.2" y2="703" stroke="#8a949e" stroke-width="1"/><line x1="322.0" y1="698" x2="322.0" y2="703" stroke="#8a949e" stroke-width="1"/><polyline points="102.5,698.5 142.3,698.5 182.3,698.5 222.3,698.5 262,698.5 302,698.5" fill="none" stroke="#2b86ea" stroke-width="2"/><circle cx="102.5" cy="698.5" r="4.2" fill="#2b86ea" stroke="#fff" stroke-width="1.2"/><circle cx="142.3" cy="698.5" r="4.2" fill="#2b86ea" stroke="#fff" stroke-width="1.2"/><circle cx="182.3" cy="698.5" r="4.2" fill="#2b86ea" stroke="#fff" stroke-width="1.2"/><circle cx="222.3" cy="698.5" r="4.2" fill="#2b86ea" stroke="#fff" stroke-width="1.2"/><circle cx="262" cy="698.5" r="4.2" fill="#2b86ea" stroke="#fff" stroke-width="1.2"/><circle cx="302" cy="698.5" r="4.2" fill="#2b86ea" stroke="#fff" stroke-width="1.2"/></svg>
<div class="t " style="left:64.5px;top:560.3px;font-size:12px;line-height:12px;color:#556b82;" >2</div>
<div class="t " style="left:64.5px;top:626.3px;font-size:12px;line-height:12px;color:#556b82;" >1</div>
<div class="t " style="left:64.5px;top:692.3px;font-size:12px;line-height:12px;color:#556b82;" >0</div>
<div class="t" style="left:-100.0px;top:700px;width:200px;text-align:right;font-size:11.5px;line-height:12px;color:#1d2d3e;transform-origin:100% 0;transform:rotate(-45deg) translate(-4px,2px)">MAY 20...</div>
<div class="t" style="left:-60.2px;top:700px;width:200px;text-align:right;font-size:11.5px;line-height:12px;color:#1d2d3e;transform-origin:100% 0;transform:rotate(-45deg) translate(-4px,2px)">JUN 2025</div>
<div class="t" style="left:-20.2px;top:700px;width:200px;text-align:right;font-size:11.5px;line-height:12px;color:#1d2d3e;transform-origin:100% 0;transform:rotate(-45deg) translate(-4px,2px)">JUL 2025</div>
<div class="t" style="left:19.8px;top:700px;width:200px;text-align:right;font-size:11.5px;line-height:12px;color:#1d2d3e;transform-origin:100% 0;transform:rotate(-45deg) translate(-4px,2px)">AUG 2025</div>
<div class="t" style="left:59.5px;top:700px;width:200px;text-align:right;font-size:11.5px;line-height:12px;color:#1d2d3e;transform-origin:100% 0;transform:rotate(-45deg) translate(-4px,2px)">SEP 2025</div>
<div class="t" style="left:99.5px;top:700px;width:200px;text-align:right;font-size:11.5px;line-height:12px;color:#1d2d3e;transform-origin:100% 0;transform:rotate(-45deg) translate(-4px,2px)">OCT 2025</div>
<svg class="a" style="left:64.5px;top:773.5px;" width="28" height="8" viewBox="0 0 28 8"><line x1="0" y1="4" x2="28" y2="4" stroke="#2b86ea" stroke-width="2"/><circle cx="14" cy="4" r="4.2" fill="#2b86ea" stroke="#fff" stroke-width="1.5"/></svg>
<div class="t " style="left:98.5px;top:771.8px;font-size:12px;line-height:12px;color:#1d2d3e;" >Sales Orders</div>
<div class="card" style="left:354.2px;top:376px;width:291.5px;height:488px"></div>
<div class="t " style="left:371.7px;top:396.7px;font-size:15.7px;line-height:15.7px;color:#1d2d3e;font-weight:bold;" >Incoming Sales Orders</div>
<svg class="a" style="left:604.2px;top:406px;" width="18" height="6" viewBox="0 0 18 6"><circle cx="2.5" cy="3" r="2.2" fill="#1a59c4"/><circle cx="8.5" cy="3" r="2.2" fill="#1a59c4"/><circle cx="14.5" cy="3" r="2.2" fill="#1a59c4"/></svg>
<div class="t " style="left:371.7px;top:427.3px;font-size:13.8px;line-height:13.8px;color:#5a6a7d;" >Average of the Last 6 Months |</div>
<div class="t " style="left:371.7px;top:443.3px;font-size:13.8px;line-height:13.8px;color:#5a6a7d;" >EUR</div>
<div class="t " style="left:370.2px;top:469.0px;font-size:36px;line-height:36px;color:#1d2d3e;-webkit-text-stroke:0.9px #fff;letter-spacing:-1px" >0,00</div>
<div class="t " style="left:371.2px;top:506.3px;font-size:11.5px;line-height:11.5px;color:#556b82;" >Net Value</div>
<div class="sep" style="left:355.2px;top:534px;width:289.5px"></div>
<div class="t " style="left:371.2px;top:552.7px;font-size:13.75px;line-height:13.75px;color:#1d2d3e;" >Net Value per Month | EUR</div>
<svg class="a" style="left:0;top:0" width="1919" height="1079"><line x1="389.5" y1="582.5" x2="628.5" y2="582.5" stroke="#a9b0b8" stroke-width="1"/><line x1="389.5" y1="604.5" x2="628.5" y2="604.5" stroke="#a9b0b8" stroke-width="1"/><line x1="389.5" y1="626.5" x2="628.5" y2="626.5" stroke="#a9b0b8" stroke-width="1"/><line x1="389.5" y1="648.5" x2="628.5" y2="648.5" stroke="#a9b0b8" stroke-width="1"/><line x1="389.5" y1="670.5" x2="628.5" y2="670.5" stroke="#a9b0b8" stroke-width="1"/><line x1="389.5" y1="692.5" x2="628.5" y2="692.5" stroke="#a9b0b8" stroke-width="1"/><line x1="389.5" y1="714.5" x2="628.5" y2="714.5" stroke="#8a949e" stroke-width="1"/><line x1="389.5" y1="714" x2="389.5" y2="719" stroke="#8a949e" stroke-width="1"/><line x1="429.3" y1="714" x2="429.3" y2="719" stroke="#8a949e" stroke-width="1"/><line x1="469.2" y1="714" x2="469.2" y2="719" stroke="#8a949e" stroke-width="1"/><line x1="509.0" y1="714" x2="509.0" y2="719" stroke="#8a949e" stroke-width="1"/><line x1="548.8" y1="714" x2="548.8" y2="719" stroke="#8a949e" stroke-width="1"/><line x1="588.7" y1="714" x2="588.7" y2="719" stroke="#8a949e" stroke-width="1"/><line x1="628.5" y1="714" x2="628.5" y2="719" stroke="#8a949e" stroke-width="1"/><polyline points="409,714.5 449,714.5 488.7,714.5 528.3,714.5 568.3,714.5 608.3,714.5" fill="none" stroke="#2b86ea" stroke-width="2"/><circle cx="409" cy="714.5" r="4.2" fill="#2b86ea" stroke="#fff" stroke-width="1.2"/><circle cx="449" cy="714.5" r="4.2" fill="#2b86ea" stroke="#fff" stroke-width="1.2"/><circle cx="488.7" cy="714.5" r="4.2" fill="#2b86ea" stroke="#fff" stroke-width="1.2"/><circle cx="528.3" cy="714.5" r="4.2" fill="#2b86ea" stroke="#fff" stroke-width="1.2"/><circle cx="568.3" cy="714.5" r="4.2" fill="#2b86ea" stroke="#fff" stroke-width="1.2"/><circle cx="608.3" cy="714.5" r="4.2" fill="#2b86ea" stroke="#fff" stroke-width="1.2"/></svg>
<div class="t " style="left:371.2px;top:576.3px;font-size:12px;line-height:12px;color:#556b82;" >1</div>
<div class="t " style="left:371.2px;top:598.3px;font-size:12px;line-height:12px;color:#556b82;" >1</div>
<div class="t " style="left:371.2px;top:620.3px;font-size:12px;line-height:12px;color:#556b82;" >1</div>
<div class="t " style="left:371.2px;top:642.3px;font-size:12px;line-height:12px;color:#556b82;" >1</div>
<div class="t " style="left:371.2px;top:664.3px;font-size:12px;line-height:12px;color:#556b82;" >0</div>
<div class="t " style="left:371.2px;top:686.3px;font-size:12px;line-height:12px;color:#556b82;" >0</div>
<div class="t " style="left:371.2px;top:708.3px;font-size:12px;line-height:12px;color:#556b82;" >0</div>
<div class="t" style="left:206.5px;top:716px;width:200px;text-align:right;font-size:11.5px;line-height:12px;color:#1d2d3e;transform-origin:100% 0;transform:rotate(-45deg) translate(-4px,2px)">MAY 20...</div>
<div class="t" style="left:246.5px;top:716px;width:200px;text-align:right;font-size:11.5px;line-height:12px;color:#1d2d3e;transform-origin:100% 0;transform:rotate(-45deg) translate(-4px,2px)">JUN 2025</div>
<div class="t" style="left:286.2px;top:716px;width:200px;text-align:right;font-size:11.5px;line-height:12px;color:#1d2d3e;transform-origin:100% 0;transform:rotate(-45deg) translate(-4px,2px)">JUL 2025</div>
<div class="t" style="left:325.8px;top:716px;width:200px;text-align:right;font-size:11.5px;line-height:12px;color:#1d2d3e;transform-origin:100% 0;transform:rotate(-45deg) translate(-4px,2px)">AUG 2025</div>
<div class="t" style="left:365.8px;top:716px;width:200px;text-align:right;font-size:11.5px;line-height:12px;color:#1d2d3e;transform-origin:100% 0;transform:rotate(-45deg) translate(-4px,2px)">SEP 2025</div>
<div class="t" style="left:405.8px;top:716px;width:200px;text-align:right;font-size:11.5px;line-height:12px;color:#1d2d3e;transform-origin:100% 0;transform:rotate(-45deg) translate(-4px,2px)">OCT 2025</div>
<svg class="a" style="left:371.2px;top:789.5px;" width="28" height="8" viewBox="0 0 28 8"><line x1="0" y1="4" x2="28" y2="4" stroke="#2b86ea" stroke-width="2"/><circle cx="14" cy="4" r="4.2" fill="#2b86ea" stroke="#fff" stroke-width="1.5"/></svg>
<div class="t " style="left:405.2px;top:787.8px;font-size:12px;line-height:12px;color:#1d2d3e;" >Net Value</div>
<div class="card" style="left:660.9px;top:376px;width:291.5px;height:372px"></div>
<div class="t " style="left:678.4px;top:396.7px;font-size:15.7px;line-height:15.7px;color:#1d2d3e;font-weight:bold;" >Open Sales Orders</div>
<svg class="a" style="left:910.9px;top:406px;" width="18" height="6" viewBox="0 0 18 6"><circle cx="2.5" cy="3" r="2.2" fill="#1a59c4"/><circle cx="8.5" cy="3" r="2.2" fill="#1a59c4"/><circle cx="14.5" cy="3" r="2.2" fill="#1a59c4"/></svg>
<div class="t " style="left:678.4px;top:427.3px;font-size:13.8px;line-height:13.8px;color:#5a6a7d;" >Ranked by Requested Delivery</div>
<div class="t " style="left:678.4px;top:443.3px;font-size:13.8px;line-height:13.8px;color:#5a6a7d;" >Date</div>
<div class="sep" style="left:661.9px;top:473px;width:289.5px"></div>
<svg class="a" style="left:742px;top:526.5px;" width="128" height="66" viewBox="0 0 128 66"><rect x="0" y="10" width="128" height="55" rx="7" fill="#89c7fb"/><path d="M24 1.5L53.5 1.2 58 21 28.5 22.5z" fill="#58abf8"/><path d="M24 1.5L28.5 22.5" stroke="#0f3c8c" stroke-width=".9"/><path d="M36 9.3L29.9 7.8A6.3 6.1 0 1 0 34.3 3.2z" fill="#1a6fe6"/><path d="M45.8 20.5L85.2 17.7 85.6 36.7 51.4 41z" fill="#fff" stroke="#0f2a66" stroke-width=".8"/><ellipse cx="52" cy="50.5" rx="16" ry="4.9" fill="#2a89f5"/><path d="M61 47.2L80.5 56.8 78 58.3 58 54.5z" fill="#2a89f5"/><rect x="84.5" y="20.5" width="14.5" height="4.5" rx="2.2" fill="#2173ea"/><rect x="86.3" y="26.9" width="15" height="4.3" rx="2.1" fill="#5aa6f6"/><rect x="88" y="32.9" width="15.5" height="5.4" rx="2.7" fill="#2173ea" transform="rotate(-4 95 35)"/><path d="M76.5 33L81.5 57" stroke="#b64714" stroke-width="5" stroke-linecap="round"/><path d="M76.5 33L81.5 57" stroke="#d46423" stroke-width="3" stroke-linecap="round"/><ellipse cx="68" cy="17" rx="16.5" ry="15.3" fill="#fdf0f5" stroke="#9e3c10" stroke-width="4.4"/><ellipse cx="68" cy="17" rx="16.5" ry="15.3" fill="none" stroke="#d0601f" stroke-width="2.6"/><path d="M64.3 14.2a3.9 3.9 0 1 1 5.2 3.6c-.9.4-1.5 1-1.5 2v1.4" fill="none" stroke="#19204a" stroke-width="1.8"/><circle cx="68" cy="24" r="1" fill="#19204a"/></svg>
<div class="t " style="left:660.9px;top:632.5px;font-size:19.5px;line-height:19.5px;color:#1d2d3e;font-weight:bold;width:291.5px;text-align:center;" >There's nothing to see</div>
<div class="t " style="left:660.9px;top:655.0px;font-size:19.5px;line-height:19.5px;color:#1d2d3e;font-weight:bold;width:291.5px;text-align:center;" >right now</div>
<div class="t " style="left:660.9px;top:686.2px;font-size:13.9px;line-height:13.9px;color:#1d2d3e;width:291.5px;text-align:center;" >When there is, it will be displayed here.</div>
<div class="card" style="left:967.6px;top:376px;width:291.5px;height:356px"></div>
<div class="t " style="left:985.1px;top:396.7px;font-size:15.7px;line-height:15.7px;color:#1d2d3e;font-weight:bold;" >Rejected Sales Orders</div>
<svg class="a" style="left:1217.6px;top:406px;" width="18" height="6" viewBox="0 0 18 6"><circle cx="2.5" cy="3" r="2.2" fill="#1a59c4"/><circle cx="8.5" cy="3" r="2.2" fill="#1a59c4"/><circle cx="14.5" cy="3" r="2.2" fill="#1a59c4"/></svg>
<div class="t " style="left:985.1px;top:427.3px;font-size:13.8px;line-height:13.8px;color:#5a6a7d;" >Last 6 Months</div>
<div class="sep" style="left:968.6px;top:457px;width:289.5px"></div>
<svg class="a" style="left:1049px;top:510.5px;" width="128" height="66" viewBox="0 0 128 66"><rect x="0" y="10" width="128" height="55" rx="7" fill="#89c7fb"/><path d="M24 1.5L53.5 1.2 58 21 28.5 22.5z" fill="#58abf8"/><path d="M24 1.5L28.5 22.5" stroke="#0f3c8c" stroke-width=".9"/><path d="M36 9.3L29.9 7.8A6.3 6.1 0 1 0 34.3 3.2z" fill="#1a6fe6"/><path d="M45.8 20.5L85.2 17.7 85.6 36.7 51.4 41z" fill="#fff" stroke="#0f2a66" stroke-width=".8"/><ellipse cx="52" cy="50.5" rx="16" ry="4.9" fill="#2a89f5"/><path d="M61 47.2L80.5 56.8 78 58.3 58 54.5z" fill="#2a89f5"/><rect x="84.5" y="20.5" width="14.5" height="4.5" rx="2.2" fill="#2173ea"/><rect x="86.3" y="26.9" width="15" height="4.3" rx="2.1" fill="#5aa6f6"/><rect x="88" y="32.9" width="15.5" height="5.4" rx="2.7" fill="#2173ea" transform="rotate(-4 95 35)"/><path d="M76.5 33L81.5 57" stroke="#b64714" stroke-width="5" stroke-linecap="round"/><path d="M76.5 33L81.5 57" stroke="#d46423" stroke-width="3" stroke-linecap="round"/><ellipse cx="68" cy="17" rx="16.5" ry="15.3" fill="#fdf0f5" stroke="#9e3c10" stroke-width="4.4"/><ellipse cx="68" cy="17" rx="16.5" ry="15.3" fill="none" stroke="#d0601f" stroke-width="2.6"/><path d="M64.3 14.2a3.9 3.9 0 1 1 5.2 3.6c-.9.4-1.5 1-1.5 2v1.4" fill="none" stroke="#19204a" stroke-width="1.8"/><circle cx="68" cy="24" r="1" fill="#19204a"/></svg>
<div class="t " style="left:967.6px;top:616.5px;font-size:19.5px;line-height:19.5px;color:#1d2d3e;font-weight:bold;width:291.5px;text-align:center;" >There's nothing to see</div>
<div class="t " style="left:967.6px;top:639.0px;font-size:19.5px;line-height:19.5px;color:#1d2d3e;font-weight:bold;width:291.5px;text-align:center;" >right now</div>
<div class="t " style="left:967.6px;top:670.2px;font-size:13.9px;line-height:13.9px;color:#1d2d3e;width:291.5px;text-align:center;" >When there is, it will be displayed here.</div>
<div class="card" style="left:1274.3px;top:376px;width:291.5px;height:372px"></div>
<div class="t " style="left:1291.8px;top:396.7px;font-size:15.7px;line-height:15.7px;color:#1d2d3e;font-weight:bold;" >Customer Returns</div>
<svg class="a" style="left:1524.3px;top:406px;" width="18" height="6" viewBox="0 0 18 6"><circle cx="2.5" cy="3" r="2.2" fill="#1a59c4"/><circle cx="8.5" cy="3" r="2.2" fill="#1a59c4"/><circle cx="14.5" cy="3" r="2.2" fill="#1a59c4"/></svg>
<div class="t " style="left:1291.8px;top:427.3px;font-size:13.8px;line-height:13.8px;color:#5a6a7d;" >Ranked by Reason for Return</div>
<div class="t " style="left:1291.8px;top:443.3px;font-size:13.8px;line-height:13.8px;color:#5a6a7d;" >(Last 6 Months)</div>
<div class="sep" style="left:1275.3px;top:473px;width:289.5px"></div>
<svg class="a" style="left:1355.5px;top:526.5px;" width="128" height="66" viewBox="0 0 128 66"><rect x="0" y="10" width="128" height="55" rx="7" fill="#89c7fb"/><path d="M24 1.5L53.5 1.2 58 21 28.5 22.5z" fill="#58abf8"/><path d="M24 1.5L28.5 22.5" stroke="#0f3c8c" stroke-width=".9"/><path d="M36 9.3L29.9 7.8A6.3 6.1 0 1 0 34.3 3.2z" fill="#1a6fe6"/><path d="M45.8 20.5L85.2 17.7 85.6 36.7 51.4 41z" fill="#fff" stroke="#0f2a66" stroke-width=".8"/><ellipse cx="52" cy="50.5" rx="16" ry="4.9" fill="#2a89f5"/><path d="M61 47.2L80.5 56.8 78 58.3 58 54.5z" fill="#2a89f5"/><rect x="84.5" y="20.5" width="14.5" height="4.5" rx="2.2" fill="#2173ea"/><rect x="86.3" y="26.9" width="15" height="4.3" rx="2.1" fill="#5aa6f6"/><rect x="88" y="32.9" width="15.5" height="5.4" rx="2.7" fill="#2173ea" transform="rotate(-4 95 35)"/><path d="M76.5 33L81.5 57" stroke="#b64714" stroke-width="5" stroke-linecap="round"/><path d="M76.5 33L81.5 57" stroke="#d46423" stroke-width="3" stroke-linecap="round"/><ellipse cx="68" cy="17" rx="16.5" ry="15.3" fill="#fdf0f5" stroke="#9e3c10" stroke-width="4.4"/><ellipse cx="68" cy="17" rx="16.5" ry="15.3" fill="none" stroke="#d0601f" stroke-width="2.6"/><path d="M64.3 14.2a3.9 3.9 0 1 1 5.2 3.6c-.9.4-1.5 1-1.5 2v1.4" fill="none" stroke="#19204a" stroke-width="1.8"/><circle cx="68" cy="24" r="1" fill="#19204a"/></svg>
<div class="t " style="left:1274.3px;top:632.5px;font-size:19.5px;line-height:19.5px;color:#1d2d3e;font-weight:bold;width:291.5px;text-align:center;" >There's nothing to see</div>
<div class="t " style="left:1274.3px;top:655.0px;font-size:19.5px;line-height:19.5px;color:#1d2d3e;font-weight:bold;width:291.5px;text-align:center;" >right now</div>
<div class="t " style="left:1274.3px;top:686.2px;font-size:13.9px;line-height:13.9px;color:#1d2d3e;width:291.5px;text-align:center;" >When there is, it will be displayed here.</div>
<div class="card" style="left:1581.0px;top:376px;width:291.5px;height:452px"></div>
<div class="t " style="left:1598.5px;top:396.7px;font-size:15.7px;line-height:15.7px;color:#1d2d3e;font-weight:bold;" >Delivery Performance</div>
<svg class="a" style="left:1831.0px;top:406px;" width="18" height="6" viewBox="0 0 18 6"><circle cx="2.5" cy="3" r="2.2" fill="#1a59c4"/><circle cx="8.5" cy="3" r="2.2" fill="#1a59c4"/><circle cx="14.5" cy="3" r="2.2" fill="#1a59c4"/></svg>
<div class="sep" style="left:1582.0px;top:433px;width:289.5px"></div>
<div class="a" style="left:1599px;top:443px;width:195px;height:26px;background:#fff;border:1px solid #d6dae1;border-bottom:1px solid #556b82;border-radius:4px"></div>
<div class="t " style="left:1606.0px;top:449.4px;font-size:13.7px;line-height:13.7px;color:#1d2d3e;" >Delivered as Requested</div>
<svg class="a" style="left:1771px;top:452px;" width="13" height="8" viewBox="0 0 13 8"><path d="M1 1l5.5 5.5L12 1" fill="none" stroke="#1d2d3e" stroke-width="1.7"/></svg>
<div class="sep" style="left:1582.0px;top:481px;width:289.5px"></div>
<svg class="a" style="left:1662px;top:570.5px;" width="128" height="66" viewBox="0 0 128 66"><rect x="0" y="10" width="128" height="55" rx="7" fill="#89c7fb"/><path d="M24 1.5L53.5 1.2 58 21 28.5 22.5z" fill="#58abf8"/><path d="M24 1.5L28.5 22.5" stroke="#0f3c8c" stroke-width=".9"/><path d="M36 9.3L29.9 7.8A6.3 6.1 0 1 0 34.3 3.2z" fill="#1a6fe6"/><path d="M45.8 20.5L85.2 17.7 85.6 36.7 51.4 41z" fill="#fff" stroke="#0f2a66" stroke-width=".8"/><ellipse cx="52" cy="50.5" rx="16" ry="4.9" fill="#2a89f5"/><path d="M61 47.2L80.5 56.8 78 58.3 58 54.5z" fill="#2a89f5"/><rect x="84.5" y="20.5" width="14.5" height="4.5" rx="2.2" fill="#2173ea"/><rect x="86.3" y="26.9" width="15" height="4.3" rx="2.1" fill="#5aa6f6"/><rect x="88" y="32.9" width="15.5" height="5.4" rx="2.7" fill="#2173ea" transform="rotate(-4 95 35)"/><path d="M76.5 33L81.5 57" stroke="#b64714" stroke-width="5" stroke-linecap="round"/><path d="M76.5 33L81.5 57" stroke="#d46423" stroke-width="3" stroke-linecap="round"/><ellipse cx="68" cy="17" rx="16.5" ry="15.3" fill="#fdf0f5" stroke="#9e3c10" stroke-width="4.4"/><ellipse cx="68" cy="17" rx="16.5" ry="15.3" fill="none" stroke="#d0601f" stroke-width="2.6"/><path d="M64.3 14.2a3.9 3.9 0 1 1 5.2 3.6c-.9.4-1.5 1-1.5 2v1.4" fill="none" stroke="#19204a" stroke-width="1.8"/><circle cx="68" cy="24" r="1" fill="#19204a"/></svg>
<div class="t " style="left:1581.0px;top:676.5px;font-size:19.5px;line-height:19.5px;color:#1d2d3e;font-weight:bold;width:291.5px;text-align:center;" >There's nothing to see</div>
<div class="t " style="left:1581.0px;top:699.0px;font-size:19.5px;line-height:19.5px;color:#1d2d3e;font-weight:bold;width:291.5px;text-align:center;" >right now</div>
<div class="t " style="left:1581.0px;top:730.2px;font-size:13.9px;line-height:13.9px;color:#1d2d3e;width:291.5px;text-align:center;" >When there is, it will be displayed here.</div>
<div class="card" style="left:660.9px;top:761px;width:291.5px;height:339px"></div>
<div class="t " style="left:678.4px;top:780.7px;font-size:15.7px;line-height:15.7px;color:#1d2d3e;font-weight:bold;" >Open Quotations</div>
<svg class="a" style="left:910.9px;top:790px;" width="18" height="6" viewBox="0 0 18 6"><circle cx="2.5" cy="3" r="2.2" fill="#1a59c4"/><circle cx="8.5" cy="3" r="2.2" fill="#1a59c4"/><circle cx="14.5" cy="3" r="2.2" fill="#1a59c4"/></svg>
<div class="t " style="left:678.4px;top:811.3px;font-size:13.8px;line-height:13.8px;color:#5a6a7d;" >Ranked by Validity</div>
<div class="sep" style="left:661.9px;top:841px;width:289.5px"></div>
<svg class="a" style="left:742px;top:894.5px;" width="128" height="66" viewBox="0 0 128 66"><rect x="0" y="10" width="128" height="55" rx="7" fill="#89c7fb"/><path d="M24 1.5L53.5 1.2 58 21 28.5 22.5z" fill="#58abf8"/><path d="M24 1.5L28.5 22.5" stroke="#0f3c8c" stroke-width=".9"/><path d="M36 9.3L29.9 7.8A6.3 6.1 0 1 0 34.3 3.2z" fill="#1a6fe6"/><path d="M45.8 20.5L85.2 17.7 85.6 36.7 51.4 41z" fill="#fff" stroke="#0f2a66" stroke-width=".8"/><ellipse cx="52" cy="50.5" rx="16" ry="4.9" fill="#2a89f5"/><path d="M61 47.2L80.5 56.8 78 58.3 58 54.5z" fill="#2a89f5"/><rect x="84.5" y="20.5" width="14.5" height="4.5" rx="2.2" fill="#2173ea"/><rect x="86.3" y="26.9" width="15" height="4.3" rx="2.1" fill="#5aa6f6"/><rect x="88" y="32.9" width="15.5" height="5.4" rx="2.7" fill="#2173ea" transform="rotate(-4 95 35)"/><path d="M76.5 33L81.5 57" stroke="#b64714" stroke-width="5" stroke-linecap="round"/><path d="M76.5 33L81.5 57" stroke="#d46423" stroke-width="3" stroke-linecap="round"/><ellipse cx="68" cy="17" rx="16.5" ry="15.3" fill="#fdf0f5" stroke="#9e3c10" stroke-width="4.4"/><ellipse cx="68" cy="17" rx="16.5" ry="15.3" fill="none" stroke="#d0601f" stroke-width="2.6"/><path d="M64.3 14.2a3.9 3.9 0 1 1 5.2 3.6c-.9.4-1.5 1-1.5 2v1.4" fill="none" stroke="#19204a" stroke-width="1.8"/><circle cx="68" cy="24" r="1" fill="#19204a"/></svg>
<div class="t " style="left:660.9px;top:1000.5px;font-size:19.5px;line-height:19.5px;color:#1d2d3e;font-weight:bold;width:291.5px;text-align:center;" >There's nothing to see</div>
<div class="t " style="left:660.9px;top:1023.0px;font-size:19.5px;line-height:19.5px;color:#1d2d3e;font-weight:bold;width:291.5px;text-align:center;" >right now</div>
<div class="t " style="left:660.9px;top:1054.2px;font-size:13.9px;line-height:13.9px;color:#1d2d3e;width:291.5px;text-align:center;" >When there is, it will be displayed here.</div>
<div class="card" style="left:967.6px;top:745px;width:291.5px;height:179px"></div>
<div class="t " style="left:984.6px;top:764.7px;font-size:15.7px;line-height:15.7px;color:#1d2d3e;font-weight:bold;" >Rejected</div>
<div class="t " style="left:984.6px;top:787.7px;font-size:15.7px;line-height:15.7px;color:#1d2d3e;font-weight:bold;" >Quotations</div>
<svg class="a" style="left:1154.6px;top:774px;" width="18" height="6" viewBox="0 0 18 6"><circle cx="2.5" cy="3" r="2.2" fill="#1a59c4"/><circle cx="8.5" cy="3" r="2.2" fill="#1a59c4"/><circle cx="14.5" cy="3" r="2.2" fill="#1a59c4"/></svg>
<div class="t " style="left:984.6px;top:817.4px;font-size:13.7px;line-height:13.7px;color:#556b82;font-weight:bold;" >Last 6 Months</div>
<div class="t " style="left:1200.0px;top:764.0px;font-size:36px;line-height:36px;color:#0a5ed8;width:50px;text-align:center;-webkit-text-stroke:0.8px #fff" >0</div>
<div class="t " style="left:1200.0px;top:804.6px;font-size:13.5px;line-height:13.5px;color:#0a5ed8;width:50px;text-align:center;" >of</div>
<div class="t " style="left:1200.0px;top:820.6px;font-size:13.5px;line-height:13.5px;color:#0a5ed8;width:50px;text-align:center;" >0</div>
<svg class="a" style="left:1209px;top:863px;" width="34" height="34" viewBox="0 0 34 34"><g fill="none" stroke="#1565d8" stroke-width="3" stroke-linejoin="round"><path d="M2 16V5.5l14.5-2.5"/><path d="M8 22V11l16.5-2.5"/><path d="M14.5 15.5l17-2.5v13l-17 2.5z"/></g></svg>
<div class="t " style="left:985.0px;top:891.4px;font-size:13.7px;line-height:13.7px;color:#0a5ed8;" >View All</div>
<div class="card" style="left:1274.3px;top:761px;width:291.5px;height:339px"></div>
<div class="t " style="left:1291.8px;top:781.2px;font-size:15.7px;line-height:15.7px;color:#1d2d3e;font-weight:bold;" >Sales Contract Fulfillment</div>
<svg class="a" style="left:1524.3px;top:790px;" width="18" height="6" viewBox="0 0 18 6"><circle cx="2.5" cy="3" r="2.2" fill="#1a59c4"/><circle cx="8.5" cy="3" r="2.2" fill="#1a59c4"/><circle cx="14.5" cy="3" r="2.2" fill="#1a59c4"/></svg>
<div class="sep" style="left:1275.3px;top:817px;width:289.5px"></div>
<div class="a" style="left:1292px;top:827px;width:181px;height:26px;background:#fff;border:1px solid #d6dae1;border-bottom:1px solid #556b82;border-radius:4px"></div>
<div class="t " style="left:1300.0px;top:833.4px;font-size:13.7px;line-height:13.7px;color:#1d2d3e;" >Ranked by Validity</div>
<svg class="a" style="left:1451px;top:836px;" width="13" height="8" viewBox="0 0 13 8"><path d="M1 1l5.5 5.5L12 1" fill="none" stroke="#1d2d3e" stroke-width="1.7"/></svg>
<div class="sep" style="left:1275.3px;top:865px;width:289.5px"></div>
<svg class="a" style="left:1355.5px;top:914.5px;" width="128" height="66" viewBox="0 0 128 66"><rect x="0" y="10" width="128" height="55" rx="7" fill="#89c7fb"/><path d="M24 1.5L53.5 1.2 58 21 28.5 22.5z" fill="#58abf8"/><path d="M24 1.5L28.5 22.5" stroke="#0f3c8c" stroke-width=".9"/><path d="M36 9.3L29.9 7.8A6.3 6.1 0 1 0 34.3 3.2z" fill="#1a6fe6"/><path d="M45.8 20.5L85.2 17.7 85.6 36.7 51.4 41z" fill="#fff" stroke="#0f2a66" stroke-width=".8"/><ellipse cx="52" cy="50.5" rx="16" ry="4.9" fill="#2a89f5"/><path d="M61 47.2L80.5 56.8 78 58.3 58 54.5z" fill="#2a89f5"/><rect x="84.5" y="20.5" width="14.5" height="4.5" rx="2.2" fill="#2173ea"/><rect x="86.3" y="26.9" width="15" height="4.3" rx="2.1" fill="#5aa6f6"/><rect x="88" y="32.9" width="15.5" height="5.4" rx="2.7" fill="#2173ea" transform="rotate(-4 95 35)"/><path d="M76.5 33L81.5 57" stroke="#b64714" stroke-width="5" stroke-linecap="round"/><path d="M76.5 33L81.5 57" stroke="#d46423" stroke-width="3" stroke-linecap="round"/><ellipse cx="68" cy="17" rx="16.5" ry="15.3" fill="#fdf0f5" stroke="#9e3c10" stroke-width="4.4"/><ellipse cx="68" cy="17" rx="16.5" ry="15.3" fill="none" stroke="#d0601f" stroke-width="2.6"/><path d="M64.3 14.2a3.9 3.9 0 1 1 5.2 3.6c-.9.4-1.5 1-1.5 2v1.4" fill="none" stroke="#19204a" stroke-width="1.8"/><circle cx="68" cy="24" r="1" fill="#19204a"/></svg>
<div class="t " style="left:1274.3px;top:1020.5px;font-size:19.5px;line-height:19.5px;color:#1d2d3e;font-weight:bold;width:291.5px;text-align:center;" >There's nothing to see</div>
<div class="t " style="left:1274.3px;top:1043.0px;font-size:19.5px;line-height:19.5px;color:#1d2d3e;font-weight:bold;width:291.5px;text-align:center;" >right now</div>
<div class="t " style="left:1274.3px;top:1074.2px;font-size:13.9px;line-height:13.9px;color:#1d2d3e;width:291.5px;text-align:center;" >When there is, it will be displayed here.</div>
<div class="card" style="left:1581.0px;top:840px;width:291.5px;height:260px"></div>
<div class="t " style="left:1598.5px;top:860.7px;font-size:15.7px;line-height:15.7px;color:#1d2d3e;font-weight:bold;" >Quick Actions</div>
<svg class="a" style="left:1831.0px;top:870px;" width="18" height="6" viewBox="0 0 18 6"><circle cx="2.5" cy="3" r="2.2" fill="#1a59c4"/><circle cx="8.5" cy="3" r="2.2" fill="#1a59c4"/><circle cx="14.5" cy="3" r="2.2" fill="#1a59c4"/></svg>
<div class="sep" style="left:1582.0px;top:897px;width:289.5px"></div>
<svg class="a" style="left:1598px;top:912px;" width="20" height="22" viewBox="0 0 20 22"><g fill="none" stroke="#7b8796" stroke-width="1.8" stroke-linejoin="round" stroke-linecap="round"><path d="M5.5 3.5H3a1.5 1.5 0 0 0-1.5 1.5v14.5a1.2 1.2 0 0 0 1.2 1.2H8"/><path d="M12.5 3.5h2.3a1.5 1.5 0 0 1 1.5 1.5v1.5"/><rect x="5.5" y="1" width="7" height="4.6" rx="1.6"/><path d="M17.2 12.2h-3.6a1.6 1.6 0 0 0 0 3.2h2.2a1.7 1.7 0 0 1 0 3.4h-3.6M14.5 10.6v1.4M14.5 18.9v1.6" stroke-width="1.7"/></g></svg>
<div class="t " style="left:1638.5px;top:914.4px;font-size:15.5px;line-height:15.5px;color:#1d2d3e;" >Create Sales Order - VA01</div>
<svg class="a" style="left:1598px;top:953px;" width="20" height="22" viewBox="0 0 20 22"><g fill="none" stroke="#7b8796" stroke-width="1.8" stroke-linejoin="round" stroke-linecap="round"><path d="M5.5 3.5H3a1.5 1.5 0 0 0-1.5 1.5v14.5a1.2 1.2 0 0 0 1.2 1.2H8"/><path d="M12.5 3.5h2.3a1.5 1.5 0 0 1 1.5 1.5v1.5"/><rect x="5.5" y="1" width="7" height="4.6" rx="1.6"/><path d="M17.2 12.2h-3.6a1.6 1.6 0 0 0 0 3.2h2.2a1.7 1.7 0 0 1 0 3.4h-3.6M14.5 10.6v1.4M14.5 18.9v1.6" stroke-width="1.7"/></g></svg>
<div class="t " style="left:1638.5px;top:955.4px;font-size:15.5px;line-height:15.5px;color:#1d2d3e;" >Create Sales Order</div>
<svg class="a" style="left:1598px;top:990px;" width="24" height="28" viewBox="0 0 24 28"><g fill="none" stroke="#7b8796" stroke-width="1.8" stroke-linejoin="round"><rect x="8.6" y="5" width="6" height="3.6" rx="1"/><path d="M3.8 11.7V9.2a1.5 1.5 0 0 1 1.5-1.5h3.3M14.6 7.7h3.4a1.5 1.5 0 0 1 1.5 1.5v2.5"/><path d="M3.8 21v3.2h15.7V21"/><path d="M11.6 8.6v3.4M11.6 19.8v4.4"/><path d="M13.8 13.4h-3.2a1.7 1.7 0 0 0 0 3.4h2a1.7 1.7 0 0 1 0 3.4h-3.2"/><path d="M1 15.3l2 3.4M3.7 15.3l2 3.4M17.6 18.7l2-3.4M20.3 18.7l2-3.4" stroke-width="1.5"/></g></svg>
<div class="t " style="left:1638.5px;top:996.4px;font-size:15.5px;line-height:15.5px;color:#1d2d3e;" >Create Sales Quotation</div>
<div class="card" style="left:47.5px;top:873px;width:291.5px;height:227px"></div>
<div class="t " style="left:65.0px;top:893.2px;font-size:15.7px;line-height:15.7px;color:#1d2d3e;font-weight:bold;" >Sales Volume / Profit</div>
<div class="t " style="left:65.0px;top:915.7px;font-size:15.7px;line-height:15.7px;color:#1d2d3e;font-weight:bold;" >Margin</div>
<svg class="a" style="left:297.5px;top:902px;" width="18" height="6" viewBox="0 0 18 6"><circle cx="2.5" cy="3" r="2.2" fill="#1a59c4"/><circle cx="8.5" cy="3" r="2.2" fill="#1a59c4"/><circle cx="14.5" cy="3" r="2.2" fill="#1a59c4"/></svg>
<div class="sep" style="left:48.5px;top:952px;width:289.5px"></div>
<div class="card" style="left:354.2px;top:889px;width:291.5px;height:211px"></div>
<div class="t " style="left:371.7px;top:909.2px;font-size:15.7px;line-height:15.7px;color:#1d2d3e;font-weight:bold;" >Sales Volume by Sales</div>
<div class="t " style="left:371.7px;top:932.0px;font-size:15.7px;line-height:15.7px;color:#1d2d3e;font-weight:bold;" >Area</div>
<svg class="a" style="left:604.2px;top:918px;" width="18" height="6" viewBox="0 0 18 6"><circle cx="2.5" cy="3" r="2.2" fill="#1a59c4"/><circle cx="8.5" cy="3" r="2.2" fill="#1a59c4"/><circle cx="14.5" cy="3" r="2.2" fill="#1a59c4"/></svg>
<div class="sep" style="left:355.2px;top:968px;width:289.5px"></div>
<div class="a" style="left:0px;top:1032px;width:1919px;height:47px;background:#2a292e"></div>
<svg class="a" style="left:506px;top:1044px;" width="24" height="24" viewBox="0 0 24 24"><defs><linearGradient id="wg" x1="0" y1="0" x2="1" y2="1"><stop offset="0" stop-color="#5ec8ff"/><stop offset="1" stop-color="#1b8be6"/></linearGradient></defs><rect x="0" y="0" width="11.3" height="11.3" fill="url(#wg)"/><rect x="12.7" y="0" width="11.3" height="11.3" fill="url(#wg)"/><rect x="0" y="12.7" width="11.3" height="11.3" fill="url(#wg)"/><rect x="12.7" y="12.7" width="11.3" height="11.3" fill="url(#wg)"/></svg>
<div class="a" style="left:544px;top:1041px;width:218px;height:30px;border-radius:15px;background:#f3f3f3"></div>
<svg class="a" style="left:554px;top:1047px;" width="18" height="18" viewBox="0 0 18 18"><circle cx="7.5" cy="7.5" r="5.5" fill="none" stroke="#1b1b1b" stroke-width="1.8"/><path d="M11.5 11.5l5 5" stroke="#1b1b1b" stroke-width="1.9"/></svg>
<div class="t " style="left:580.0px;top:1049.1px;font-size:14px;line-height:14px;color:#5a5a5a;" >Suche</div>
<svg class="a" style="left:774px;top:1043px;" width="24" height="24" viewBox="0 0 24 24"><rect x="2" y="5" width="20" height="16" rx="3" fill="#1a8ad4"/><rect x="0" y="9" width="12" height="11" rx="2" fill="#0a5ab8"/><text x="2.5" y="18" font-size="9" font-weight="bold" fill="#fff" font-family="Liberation Sans">O</text></svg>
<svg class="a" style="left:818px;top:1043px;" width="24" height="24" viewBox="0 0 24 24"><circle cx="16" cy="6" r="4" fill="#7b83eb"/><rect x="2" y="8" width="16" height="14" rx="3" fill="#5059c9"/><text x="6" y="19" font-size="10" font-weight="bold" fill="#fff" font-family="Liberation Sans">T</text><circle cx="19" cy="4" r="5" fill="#3ba55c"/></svg>
<svg class="a" style="left:863px;top:1043px;" width="24" height="24" viewBox="0 0 24 24"><circle cx="12" cy="12" r="11" fill="#ea4335"/><path d="M12 1a11 11 0 0 1 9.5 5.5H12z" fill="#fbbc04"/><path d="M2.5 6.5L7.5 15 12 23A11 11 0 0 1 2.5 6.5z" fill="#34a853"/><circle cx="12" cy="12" r="4.5" fill="#4285f4" stroke="#fff" stroke-width="1.5"/><circle cx="19" cy="4" r="5" fill="#e8710a"/></svg>
<svg class="a" style="left:906px;top:1043px;" width="24" height="24" viewBox="0 0 24 24"><rect x="1" y="1" width="22" height="22" rx="3" fill="#0c66e4"/><rect x="5" y="5" width="5.5" height="13" rx="1" fill="#fff"/><rect x="13.5" y="5" width="5.5" height="8" rx="1" fill="#fff"/></svg>
<svg class="a" style="left:950px;top:1043px;" width="24" height="24" viewBox="0 0 24 24"><rect x="5" y="2" width="17" height="20" rx="2" fill="#ca64ea"/><rect x="1" y="6" width="12" height="12" rx="2" fill="#7719aa"/><text x="3" y="16" font-size="9" font-weight="bold" fill="#fff" font-family="Liberation Sans">N</text></svg>
<svg class="a" style="left:994px;top:1043px;" width="24" height="24" viewBox="0 0 24 24"><path d="M1 5h8l2 2h12v14H1z" fill="#f5c33b"/><rect x="1" y="10" width="22" height="11" fill="#ffd75e"/><rect x="6" y="16" width="12" height="5" fill="#2b7de9"/></svg>
<svg class="a" style="left:1038px;top:1043px;" width="24" height="24" viewBox="0 0 24 24"><circle cx="12" cy="12" r="11" fill="#1f3a6b"/><circle cx="12" cy="12" r="8" fill="none" stroke="#e5e9f2" stroke-width="1.5"/><rect x="8" y="11" width="8" height="6" fill="#e5e9f2"/><path d="M9.5 11V9a2.5 2.5 0 0 1 5 0v2" fill="none" stroke="#e5e9f2" stroke-width="1.5"/></svg>
<svg class="a" style="left:1082px;top:1043px;" width="24" height="24" viewBox="0 0 24 24"><circle cx="12" cy="12" r="11" fill="#d8d8d8"/><circle cx="12" cy="12" r="8" fill="#fff"/><path d="M12 6v6l4 3" fill="none" stroke="#333" stroke-width="1.8"/></svg>
<svg class="a" style="left:1126px;top:1043px;" width="24" height="24" viewBox="0 0 24 24"><rect x="1" y="3" width="22" height="18" rx="2" fill="#1164c8"/><path d="M3 15l5-5 4 3 8-7" fill="none" stroke="#fff" stroke-width="1.8"/></svg>
<svg class="a" style="left:1170px;top:1043px;" width="24" height="24" viewBox="0 0 24 24"><circle cx="12" cy="12" r="11" fill="#0e2a5e"/><circle cx="12" cy="12" r="8.5" fill="#fff"/><path d="M5 12l4-3v2h6V9l4 3-4 3v-2H9v2z" fill="#0e2a5e"/></svg>
<svg class="a" style="left:1214px;top:1043px;" width="24" height="24" viewBox="0 0 24 24"><circle cx="14" cy="9" r="6.5" fill="none" stroke="#f39c12" stroke-width="3"/><path d="M9.5 13.5L2 21" stroke="#f39c12" stroke-width="3.5" stroke-linecap="round"/></svg>
<svg class="a" style="left:1258px;top:1043px;" width="24" height="24" viewBox="0 0 24 24"><rect x="1" y="1" width="22" height="22" rx="2" fill="#bf0000"/><text x="3" y="18" font-size="14" font-weight="bold" font-style="italic" fill="#fff" font-family="Liberation Sans">Fz</text></svg>
<svg class="a" style="left:1302px;top:1043px;" width="24" height="24" viewBox="0 0 24 24"><rect x="2" y="2" width="20" height="14" rx="1" fill="#3a7bd5"/><rect x="4" y="4" width="16" height="10" fill="#9fd3ff"/><rect x="8" y="17" width="8" height="3" fill="#888"/><circle cx="18" cy="18" r="4" fill="#2e7d32"/></svg>
<svg class="a" style="left:1346px;top:1043px;" width="24" height="24" viewBox="0 0 24 24"><rect x="6" y="2" width="17" height="20" rx="2" fill="#21a366"/><rect x="1" y="6" width="12" height="12" rx="2" fill="#107c41"/><text x="3.5" y="16" font-size="9" font-weight="bold" fill="#fff" font-family="Liberation Sans">X</text></svg>
<svg class="a" style="left:1389px;top:1043px;" width="24" height="24" viewBox="0 0 24 24"><rect x="3" y="3" width="15" height="15" fill="none" stroke="#e04a4a" stroke-width="2" stroke-dasharray="3 2"/><rect x="6" y="6" width="9" height="9" fill="#ddd"/><circle cx="19" cy="19" r="3" fill="none" stroke="#3b9be8" stroke-width="1.5"/></svg>
<div class="a" style="left:783px;top:1074px;width:6px;height:3px;background:#9a9a9a;border-radius:2px"></div>
<div class="a" style="left:827px;top:1074px;width:6px;height:3px;background:#9a9a9a;border-radius:2px"></div>
<div class="a" style="left:872px;top:1074px;width:6px;height:3px;background:#9a9a9a;border-radius:2px"></div>
<div class="a" style="left:915px;top:1074px;width:6px;height:3px;background:#9a9a9a;border-radius:2px"></div>
<div class="a" style="left:1047px;top:1074px;width:6px;height:3px;background:#9a9a9a;border-radius:2px"></div>
<div class="a" style="left:1267px;top:1074px;width:6px;height:3px;background:#9a9a9a;border-radius:2px"></div>
<div class="a" style="left:1311px;top:1074px;width:6px;height:3px;background:#9a9a9a;border-radius:2px"></div>
<div class="a" style="left:1355px;top:1074px;width:6px;height:3px;background:#9a9a9a;border-radius:2px"></div>
<div class="a" style="left:1392px;top:1074px;width:18px;height:3px;background:#b7b7b7;border-radius:2px"></div>
<div class="t " style="right:17.0px;top:1042.3px;font-size:11.5px;line-height:11.5px;color:#f0f0f0;" >16:27</div>
<div class="t " style="right:17.0px;top:1058.3px;font-size:11.5px;line-height:11.5px;color:#f0f0f0;" >21.10.2025</div>
</body></html>
